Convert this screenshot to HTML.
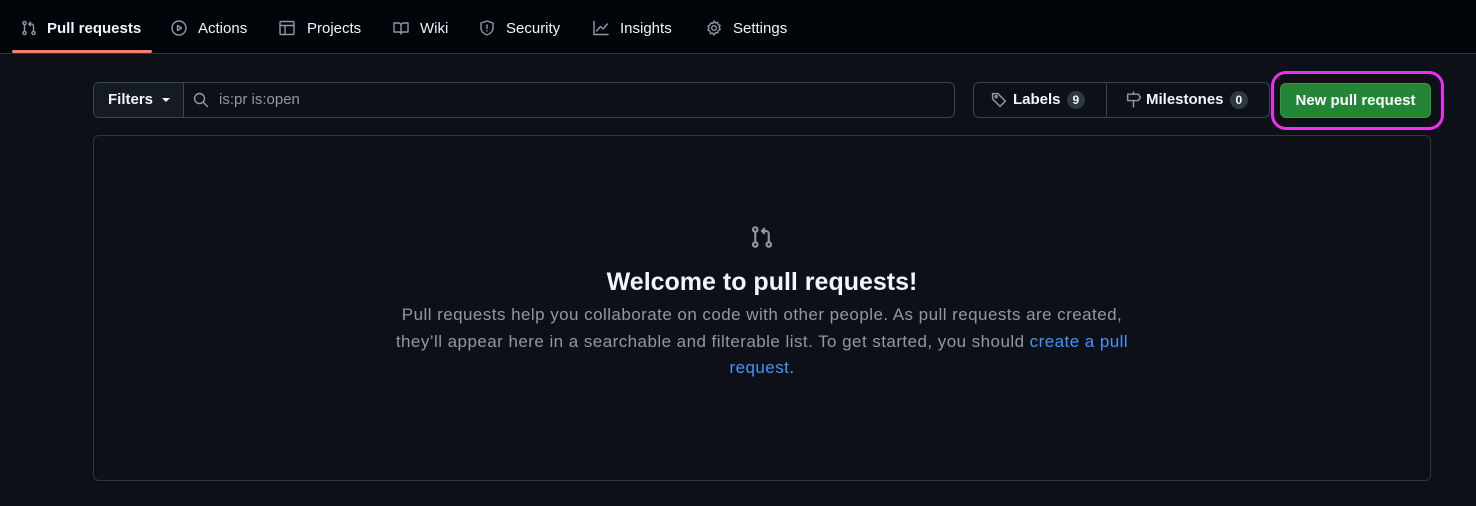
<!DOCTYPE html>
<html><head><style>
*{box-sizing:border-box;margin:0;padding:0}
body{width:1476px;height:506px;background:#0d1117;font-family:"Liberation Sans",sans-serif;color:#f0f6fc;position:relative;overflow:hidden}
.hdr{position:absolute;left:0;top:0;width:1476px;height:54px;background:#010409;border-bottom:1px solid #30363d}
.tab{position:absolute;top:19px;font-size:15px;height:20px;line-height:20px;color:#f0f6fc}
.ic{position:absolute;top:20px}
.ul{position:absolute;left:12px;top:50px;width:140px;height:3px;background:#f78166;border-radius:2px}
svg{fill:none;stroke:#9198a1;stroke-width:1.4;stroke-linecap:round;stroke-linejoin:round}
.btn{position:absolute;border:1px solid #3d444d;background:#151b23;border-radius:6px}
.cnt{display:inline-block;background:#2f3742;border-radius:10px;font-size:12px;padding:0 6px;line-height:18px;margin-left:6px;font-weight:bold}
</style></head><body>
<div class="hdr">
<svg class="ic" style="left:21px" width="16" height="16" viewBox="0 0 16 16"><circle cx="3.5" cy="3" r="1.6"/><circle cx="3.5" cy="13" r="1.6"/><path d="M3.5 4.6v6.8"/><circle cx="12.5" cy="13" r="1.6"/><path d="M12.5 11.4V6a2 2 0 0 0-2-2H8M9.5 2.3L7.8 4l1.7 1.7"/></svg>
<div class="tab" style="left:47px;font-weight:bold">Pull requests</div>
<div class="ul"></div>
<svg class="ic" style="left:171px" width="16" height="16" viewBox="0 0 16 16"><circle cx="8" cy="8" r="7"/><path d="M6.5 5.5v5l4-2.5z"/></svg>
<div class="tab" style="left:198px">Actions</div>
<svg class="ic" style="left:279px" width="16" height="16" viewBox="0 0 16 16"><rect x="1" y="1.5" width="14" height="13" rx="1"/><path d="M1 5.5h14M6 5.5v9"/></svg>
<div class="tab" style="left:307px">Projects</div>
<svg class="ic" style="left:393px" width="16" height="16" viewBox="0 0 16 16"><path d="M1 3h4.5A2.5 2.5 0 0 1 8 5.5V14a2 2 0 0 0-2-2H1zM15 3h-4.5A2.5 2.5 0 0 0 8 5.5V14a2 2 0 0 1 2-2h5z"/></svg>
<div class="tab" style="left:420px">Wiki</div>
<svg class="ic" style="left:479px" width="16" height="16" viewBox="0 0 16 16"><path d="M8 1l6 2v5c0 3.5-3 6-6 7-3-1-6-3.5-6-7V3z"/><path d="M8 5v3.5M8 10.8v.2"/></svg>
<div class="tab" style="left:506px">Security</div>
<svg class="ic" style="left:593px" width="16" height="16" viewBox="0 0 16 16"><path d="M1 1.5V14.5h14M3.5 11l4-4.5 2.5 2.5 4.5-5"/></svg>
<div class="tab" style="left:620px">Insights</div>
<svg class="ic" style="left:706px" width="16" height="16" viewBox="0 0 16 16"><circle cx="8" cy="8" r="2.3"/><path d="M8 1l1.3 1.9 2.2-.6.5 2.2 2.1.9-.9 2.1 1 1.9-2 1.1-.3 2.3-2.3-.3L8 15l-1.3-1.9-2.3.4-.4-2.3L2 10.1l1-2L2 6l2.1-.9.5-2.2 2.2.6z"/></svg>
<div class="tab" style="left:733px">Settings</div>
</div>

<div class="btn" style="left:93px;top:82px;width:92px;height:36px;border-radius:6px 0 0 6px;font-size:15px;font-weight:bold;line-height:34px;padding-left:14px">Filters <span style="display:inline-block;width:0;height:0;border-left:4px solid transparent;border-right:4px solid transparent;border-top:4px solid #f0f6fc;vertical-align:middle;margin-left:5px"></span></div>
<div class="btn" style="left:183px;top:82px;width:772px;height:36px;background:#0d1117;border-radius:0 6px 6px 0">
<svg style="position:absolute;left:9px;top:9px" width="16" height="16" viewBox="0 0 16 16"><circle cx="6.5" cy="6.5" r="5"/><path d="M10.2 10.2l4.3 4.3"/></svg>
<span style="position:absolute;left:35px;top:8px;font-size:15px;color:#9198a1">is:pr is:open</span></div>

<div class="btn" style="left:973px;top:82px;width:297px;height:36px;background:#0d1117"></div>
<div style="position:absolute;left:1106px;top:83px;width:1px;height:34px;background:#3d444d"></div>
<svg style="position:absolute;left:991px;top:91px" width="17" height="17" viewBox="0 0 16 16"><path d="M1.5 2.5v5l7 7 5-5-7-7h-5z"/><circle cx="4.8" cy="5.3" r="1"/></svg>
<div style="position:absolute;left:1013px;top:90px;font-size:15px;font-weight:bold;line-height:20px">Labels<span class="cnt">9</span></div>
<svg style="position:absolute;left:1125px;top:91px" width="17" height="17" viewBox="0 0 16 16"><path d="M8 1v2M8 9v6M2.5 3h10l2 3-2 3h-10z"/></svg>
<div style="position:absolute;left:1146px;top:90px;font-size:15px;font-weight:bold;line-height:20px">Milestones<span class="cnt">0</span></div>

<div style="position:absolute;left:1271px;top:71px;width:173px;height:59px;border:3px solid #ee2ef0;border-radius:15px"></div>
<div style="position:absolute;left:1280px;top:83px;width:151px;height:35px;background:#238636;border:1px solid #2f9a45;border-radius:6px;font-size:15px;font-weight:bold;text-align:center;line-height:33px;color:#fff">New pull request</div>

<div style="position:absolute;left:93px;top:135px;width:1338px;height:346px;border:1px solid #30363d;border-radius:6px"></div>
<svg style="position:absolute;left:750px;top:225px" width="24" height="24" viewBox="0 0 16 16"><circle cx="3.5" cy="3" r="1.5"/><circle cx="3.5" cy="13" r="1.5"/><path d="M3.5 4.5v7"/><circle cx="12.5" cy="13" r="1.5"/><path d="M12.5 11.5V6a2 2 0 0 0-2-2H8M9.5 2.5L8 4l1.5 1.5"/></svg>
<div style="position:absolute;left:0;width:1524px;top:266px;text-align:center;font-size:25px;font-weight:bold;line-height:32px">Welcome to pull requests!</div>
<div style="position:absolute;left:262px;width:1000px;top:302px;text-align:center;font-size:17px;letter-spacing:0.45px;line-height:26.5px;color:#9198a1">Pull requests help you collaborate on code with other people. As pull requests are created,<br>they’ll appear here in a searchable and filterable list. To get started, you should <span style="color:#4493f8">create a pull</span><br><span style="color:#4493f8">request</span>.</div>
</body></html>
